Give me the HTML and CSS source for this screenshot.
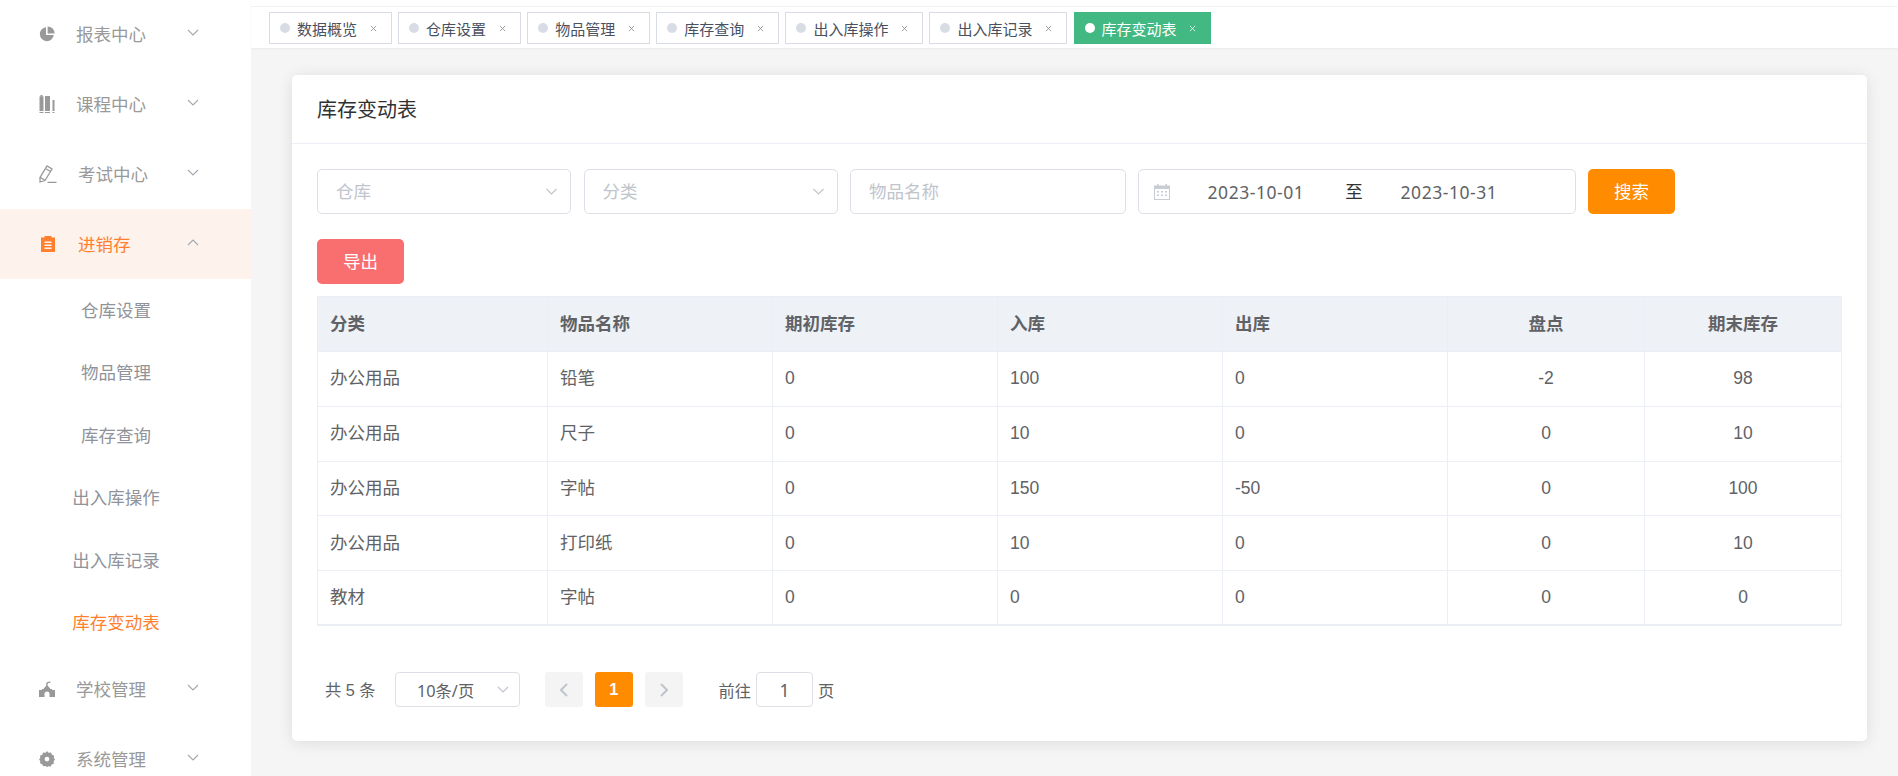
FILE: index.html
```html
<!DOCTYPE html>
<html lang="zh-CN">
<head>
<meta charset="utf-8">
<title>库存变动表</title>
<link rel="stylesheet" href="styles.css">
</head>
<body>
<div class="app">
  <aside class="sidebar">
    <nav class="nav">
      <a class="item"><svg class="ico" viewBox="0 0 16 16"><path d="M7 1.200a7 7 0 1 0 7.800 7.800H7z"/><path d="M8.600 .4V7.400h7A7 7 0 0 0 8.600 .4z"/></svg><span class="label">报表中心</span><svg class="chev" viewBox="0 0 12 7"><polyline points="1,1 6,6 11,1"/></svg></a>
      <a class="item"><svg class="ico tall" viewBox="0 0 16 18"><path d="M.5 1.500h1V0h2v1.500h1V16h-4zM.5 17h4v1h-4zM6 1h5v15H6zM6 17h5v1H6zM13.500 5h2v11h-2zM13.500 17h2v1h-2z"/></svg><span class="label">课程中心</span><svg class="chev" viewBox="0 0 12 7"><polyline points="1,1 6,6 11,1"/></svg></a>
      <a class="item"><svg class="ico wide" viewBox="0 0 18 18"><path class="line" d="M1 17V12.500L8 1L13 4L6 15.500L1 17zM6.500 3.500L11.500 6.500M1.500 12.500L5.500 15M8.500 17.300H17.500"/></svg><span class="label">考试中心</span><svg class="chev" viewBox="0 0 12 7"><polyline points="1,1 6,6 11,1"/></svg></a>
      <a class="item open"><svg class="ico wide" viewBox="0 0 18 18"><path d="M2 2.500h3.500V1h7v1.500H16V17H2zM5.500 6.500v1.500h7V6.500zM5.500 9.500v1.500h7V9.500zM5.500 12.500v1.500h7v-1.500z" fill-rule="evenodd"/></svg><span class="label">进销存</span><svg class="chev" viewBox="0 0 12 7"><polyline points="1,6 6,1 11,6"/></svg></a>
      <div class="sub">
        <a class="sub-item">仓库设置</a>
        <a class="sub-item">物品管理</a>
        <a class="sub-item">库存查询</a>
        <a class="sub-item">出入库操作</a>
        <a class="sub-item">出入库记录</a>
        <a class="sub-item current">库存变动表</a>
      </div>
      <a class="item"><svg class="ico" viewBox="0 0 16 16"><path d="M7.200 4.500V2Q8.500 .2 11.500 .5V1.800Q9.500 1.600 8.600 2.800V4.500L11.500 8H13V9H16V16H10.500V13a2.500 2.500 0 0 0-5 0V16H0V9H3V8H4.500z"/></svg><span class="label">学校管理</span><svg class="chev" viewBox="0 0 12 7"><polyline points="1,1 6,6 11,1"/></svg></a>
      <a class="item"><svg class="ico" viewBox="0 0 16 16"><path fill-rule="evenodd" d="M8 0l1.500 1.800 2.500-.3 1 2.200 2.200 1-.4 2.400L16 8.500l-1.400 1.700.4 2.300-2.300 1-1 2-2.300-.3L8 16l-1.500-1-2.300.3-1-2-2.200-1 .3-2.300L0 8.500l1.300-1.400-.3-2.400 2.200-1 1-2.200 2.500.3zM8 5.700a2.400 2.400 0 1 0 0 4.800 2.400 2.400 0 0 0 0-4.800z"/></svg><span class="label">系统管理</span><svg class="chev" viewBox="0 0 12 7"><polyline points="1,1 6,6 11,1"/></svg></a>
    </nav>
  </aside>
  <div class="main">
    <header class="topbar">
      <div class="tabs">
        <a class="tab"><i class="dot"></i><span>数据概览</span><svg class="close" viewBox="0 0 8 8"><path d="M1 1l6 6M7 1L1 7"/></svg></a>
        <a class="tab"><i class="dot"></i><span>仓库设置</span><svg class="close" viewBox="0 0 8 8"><path d="M1 1l6 6M7 1L1 7"/></svg></a>
        <a class="tab"><i class="dot"></i><span>物品管理</span><svg class="close" viewBox="0 0 8 8"><path d="M1 1l6 6M7 1L1 7"/></svg></a>
        <a class="tab"><i class="dot"></i><span>库存查询</span><svg class="close" viewBox="0 0 8 8"><path d="M1 1l6 6M7 1L1 7"/></svg></a>
        <a class="tab"><i class="dot"></i><span>出入库操作</span><svg class="close" viewBox="0 0 8 8"><path d="M1 1l6 6M7 1L1 7"/></svg></a>
        <a class="tab"><i class="dot"></i><span>出入库记录</span><svg class="close" viewBox="0 0 8 8"><path d="M1 1l6 6M7 1L1 7"/></svg></a>
        <a class="tab active"><i class="dot"></i><span>库存变动表</span><svg class="close" viewBox="0 0 8 8"><path d="M1 1l6 6M7 1L1 7"/></svg></a>
      </div>
    </header>
    <main class="content">
      <section class="card">
        <h1 class="card-title">库存变动表</h1>
        <div class="card-body">
          <div class="filters">
            <div class="field select w-select"><span class="ph">仓库</span><svg class="chev" viewBox="0 0 12 7"><polyline points="1,1 6,6 11,1"/></svg></div>
            <div class="field select w-select"><span class="ph">分类</span><svg class="chev" viewBox="0 0 12 7"><polyline points="1,1 6,6 11,1"/></svg></div>
            <div class="field w-name"><span class="ph">物品名称</span></div>
            <div class="field date">
              <svg class="cal" viewBox="0 0 16 16"><path fill-rule="evenodd" d="M0 1.500h3V0h1.500v1.500h7V0H13v1.500h3V16H0zM1 5v10h14V5zM3 7h2v1.500H3zM7 7h2v1.500H7zM11 7h2v1.500h-2zM3 10.500h2V12H3zM7 10.500h2V12H7zM11 10.500h2V12h-2z"/></svg>
              <span class="date-val">2023-10-01</span>
              <span class="date-sep">至</span>
              <span class="date-val">2023-10-31</span>
            </div>
            <button class="btn btn-search">搜索</button>
          </div>
          <button class="btn btn-export">导出</button>
          <table class="grid">
            <colgroup><col class="c1"><col class="c2"><col class="c2"><col class="c2"><col class="c2"><col class="c3"><col class="c3"></colgroup>
            <thead><tr><th>分类</th><th>物品名称</th><th>期初库存</th><th>入库</th><th>出库</th><th class="mid">盘点</th><th class="mid">期末库存</th></tr></thead>
            <tbody>
              <tr><td>办公用品</td><td>铅笔</td><td>0</td><td>100</td><td>0</td><td class="mid">-2</td><td class="mid">98</td></tr>
              <tr><td>办公用品</td><td>尺子</td><td>0</td><td>10</td><td>0</td><td class="mid">0</td><td class="mid">10</td></tr>
              <tr><td>办公用品</td><td>字帖</td><td>0</td><td>150</td><td>-50</td><td class="mid">0</td><td class="mid">100</td></tr>
              <tr><td>办公用品</td><td>打印纸</td><td>0</td><td>10</td><td>0</td><td class="mid">0</td><td class="mid">10</td></tr>
              <tr><td>教材</td><td>字帖</td><td>0</td><td>0</td><td>0</td><td class="mid">0</td><td class="mid">0</td></tr>
            </tbody>
          </table>
          <div class="pager">
            <span class="total">共 5 条</span>
            <div class="size"><span>10条/页</span><svg class="chev" viewBox="0 0 12 7"><polyline points="1,1 6,6 11,1"/></svg></div>
            <button class="page-btn nav-btn"><svg viewBox="0 0 8 14"><polyline points="7,1 1,7 7,13"/></svg></button>
            <button class="page-btn num">1</button>
            <button class="page-btn nav-btn"><svg viewBox="0 0 8 14"><polyline points="1,1 7,7 1,13"/></svg></button>
            <span class="goto">前往</span>
            <div class="page-input">1</div>
            <span class="goto-end">页</span>
          </div>
        </div>
      </section>
    </main>
  </div>
</div>
</body>
</html>
```
FILE: styles.css
```css
* { box-sizing: border-box; }
html, body { margin: 0; height: 100%; overflow: hidden; }
body {
  font-family: "Liberation Sans", "Noto Sans CJK SC", sans-serif;
  font-size: 17.5px;
  color: #606266;
  background: #f5f5f5;
}
.app { display: flex; height: 776px; }

/* sidebar */
.sidebar { width: 251px; flex: none; background: #fff; overflow: hidden; }
.nav { margin-top: -1px; }
.item {
  display: flex; align-items: center;
  height: 70px; padding: 0 52px 0 39px;
  color: #999;
}
.ico { width: 16px; height: 16px; flex: none; margin-right: 21px; fill: #999; }
.ico.tall { height: 18px; }
.ico.wide { width: 18px; height: 18px; margin-right: 21px; }
.ico .line { fill: none; stroke: #999; stroke-width: 1.3; }
.label { flex: 1; padding-bottom: 2px; }
.chev { width: 12px; height: 7px; flex: none; fill: none; stroke: #a3a8b0; stroke-width: 1.1; }
.item .chev { margin-top: -3px; }
.open { background: #fdf3ec; color: #ff8130; }
.open .ico { fill: #ff8130; }
.sub-item {
  display: flex; align-items: center; justify-content: center;
  width: 232px; height: 62.5px; padding-bottom: 2px;
  color: #909399;
}
.current { color: #ff8130; }

/* tabs */
.main { flex: 1; min-width: 0; display: flex; flex-direction: column; }
.topbar {
  height: 48px; padding: 6px 0 0; flex: none;
  background: #fff;
  box-shadow: 0 1px 2px rgba(0,0,0,.05);
  position: relative;
}
.tabs {
  display: flex; gap: 6.4px;
  height: 42px; padding: 5px 0 0 18px;
  border-top: 1px solid #f2f2f2;
}
.tab {
  display: flex; align-items: center;
  height: 32px; padding: 0 14.2px 0 10px;
  border: 1px solid #d8dce5;
  font-size: 15px; color: #495060;
  background: #fff;
}
.dot { width: 10px; height: 10px; border-radius: 50%; background: #d8dce5; margin-right: 7px; flex: none; }
.close { width: 7px; height: 7px; margin-left: 12.5px; fill: none; stroke: #8f939b; stroke-width: 1; flex: none; }
.tab.active { background: #42b983; border-color: #42b983; color: #fff; }
.tab.active .dot { background: #fff; }
.tab.active .close { stroke: #e8f6f0; }

/* card */
.content { flex: 1; padding: 27px 31px 35px 41px; }
.card {
  background: #fff; border-radius: 5px;
  box-shadow: 0 2px 15px rgba(0,0,0,.1);
  height: 666px;
}
.card-title {
  margin: 0; height: 69px; padding: 0 25px 2px;
  display: flex; align-items: center;
  font-size: 20px; font-weight: 400; color: #303133;
  border-bottom: 1px solid #ebeef5;
}
.card-body { padding: 25px 25px 0; }

/* filters */
.filters { display: flex; gap: 12.5px; height: 45px; }
.field {
  display: flex; align-items: center;
  height: 45px; padding: 0 18px;
  border: 1px solid #dcdfe6; border-radius: 5px;
  background: #fff;
}
.w-select { width: 254px; justify-content: space-between; padding-right: 12px; }
.field .chev { stroke: #c0c4cc; width: 13px; }
.w-name { width: 275.5px; }
.ph { color: #c0c4cc; padding-bottom: 3px; }
.date { width: 437.5px; padding: 0 0 0 15px; }
.cal { width: 16px; height: 16px; flex: none; fill: #c8ccd4; }
.date-val {
  width: 172px; text-align: center; color: #606266;
  font-family: "Noto Sans", "Noto Sans CJK SC", sans-serif;
  letter-spacing: .55px;
}
.date-sep { width: 24px; text-align: center; color: #303133; padding-bottom: 2px; }
.date-sep + .date-val { width: 166px; }
.btn {
  display: block; height: 45px; width: 87px;
  border: 0; border-radius: 5px;
  font: inherit; color: #fff;
  padding: 0 0 2px;
}
.btn-search { background: #ff8c00; }
.btn-export { background: #f96f6f; margin-top: 25px; }

/* table */
.grid {
  width: 1524px; margin-top: 12px;
  table-layout: fixed; border-collapse: collapse;
  border: 1px solid #ebeef5; border-bottom-width: 2px;
}
.c1 { width: 230px; }
.c2 { width: 225px; }
.c3 { width: 197px; }
th, td { border: 1px solid #ebeef5; padding: 0 12px; text-align: left; }
th { height: 55px; padding-bottom: 3px; background: #eef1f6; font-weight: 700; color: #606266; }
td { height: 54.8px; }
td:nth-child(-n+2) { padding-bottom: 4px; }
.grid .mid { text-align: center; }

/* pager */
.pager { display: flex; align-items: center; height: 35px; margin-top: 46px; font-size: 16.25px; padding-left: 8px; }
.total { width: 70px; flex: none; padding-bottom: 2px; }
.size {
  display: flex; align-items: center; justify-content: space-between;
  width: 125px; height: 35px; padding: 0 10px 0 21px; flex: none;
  border: 1px solid #dcdfe6; border-radius: 4px;
  color: #606266;
  font-family: "Noto Sans", "Noto Sans CJK SC", sans-serif;
}
.size .chev { stroke: #c0c4cc; }
.page-btn {
  width: 37.5px; height: 35px; flex: none;
  border: 0; border-radius: 3px; padding: 0;
  display: flex; align-items: center; justify-content: center;
  font: inherit;
}
.size + .page-btn { margin-left: 25px; }
.num { background: #ff8c00; color: #fff; font-weight: 700; margin: 0 12.5px; }
.nav-btn { background: #f4f4f5; }
.nav-btn svg { width: 8px; height: 14px; fill: none; stroke: #c0c4cc; stroke-width: 2; }
.goto { margin-left: 36px; }
.page-input {
  width: 57px; height: 35px; margin: 0 5px;
  display: flex; align-items: center; justify-content: center;
  border: 1px solid #dcdfe6; border-radius: 4px;
  font-size: 17.5px;
  font-family: "Noto Sans", sans-serif;
}
```
